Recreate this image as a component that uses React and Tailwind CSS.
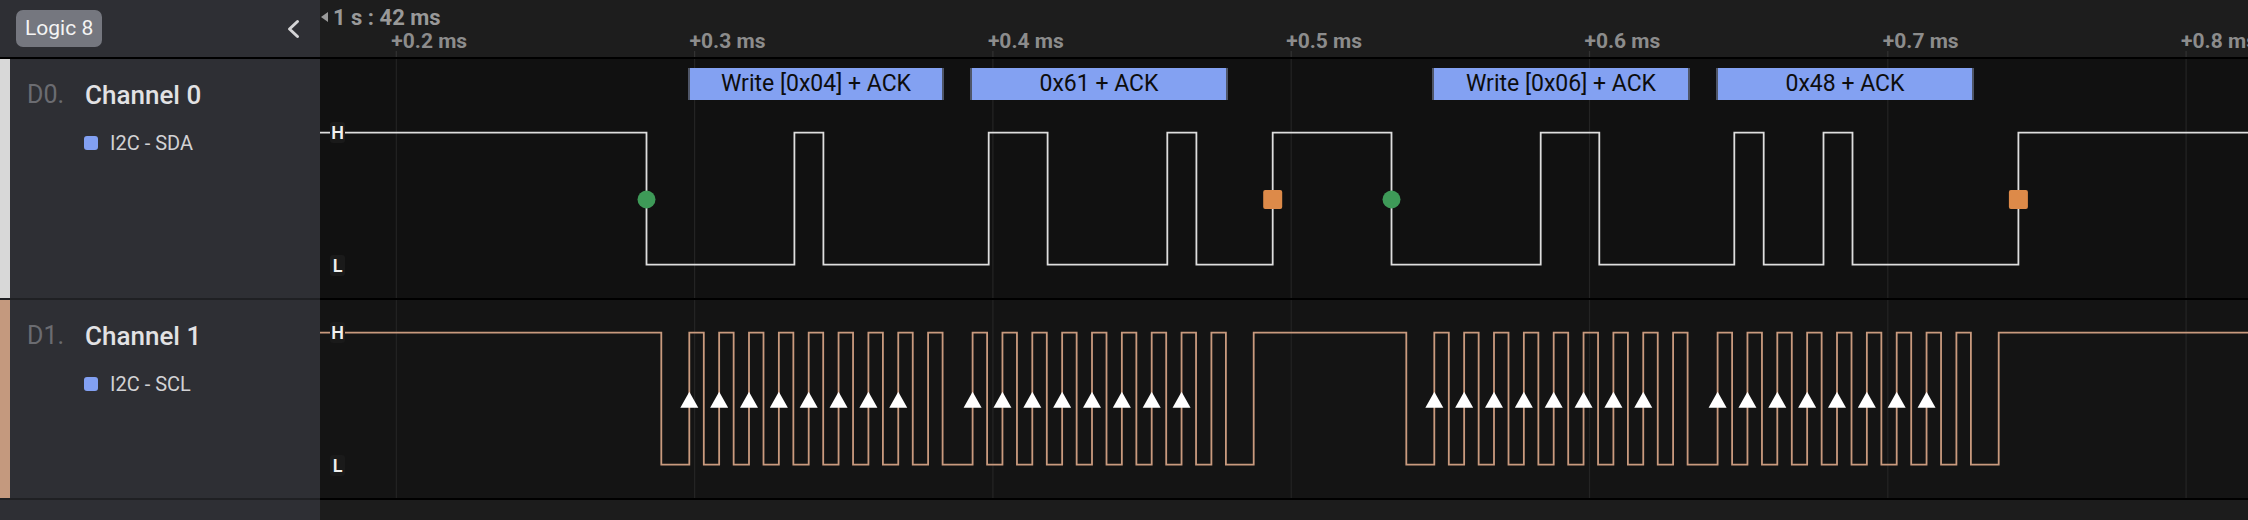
import React from "react";

const GRID = [396.3, 694.6, 992.9, 1291.2, 1589.5, 1887.8, 2186.1];
const TICKS = ["+0.2 ms", "+0.3 ms", "+0.4 ms", "+0.5 ms", "+0.6 ms", "+0.7 ms", "+0.8 ms"];
const OX = 320;
const GW = 2248 - OX;

// SCL
const SCL_HI = 32.7;
const SCL_LO = 164.7;
const T0S = [661.3, 1406.3];
const PER = 29.85;
const HIW = 14.5;

function buildScl() {
  let d = `M0 ${SCL_HI}`;
  const arrows = [];
  for (const T0 of T0S) {
    d += ` H${(T0 - OX).toFixed(2)} V${SCL_LO}`;
    for (let b = 0; b < 2; b++) {
      const base = T0 + 28 + b * 283.3;
      for (let i = 0; i < 9; i++) {
        const r = base + i * PER;
        d += ` H${(r - OX).toFixed(2)} V${SCL_HI} H${(r + HIW - OX).toFixed(2)} V${SCL_LO}`;
        if (i < 8) arrows.push(r - OX);
      }
    }
    d += ` H${(T0 + 592.4 - OX).toFixed(2)} V${SCL_HI}`;
  }
  d += ` H${GW}`;
  return { d, arrows };
}

// SDA
const SDA_HI = 73.7;
const SDA_LO = 205.7;
const SDA_EDGES = [646.5, 794.4, 823.4, 988.7, 1047.6, 1167.3, 1196.4, 1272.7, 1391.5, 1540.7, 1599.3, 1734.3, 1763.7, 1823.5, 1852.5, 2018.4];

function buildSda() {
  let d = `M0 ${SDA_HI}`;
  let high = true;
  for (const e of SDA_EDGES) {
    d += ` H${(e - OX).toFixed(2)} V${high ? SDA_LO : SDA_HI}`;
    high = !high;
  }
  d += ` H${GW}`;
  return d;
}

const DECODES = [
  { x: 688, w: 256, t: "Write [0x04] + ACK" },
  { x: 970, w: 258, t: "0x61 + ACK" },
  { x: 1432, w: 258, t: "Write [0x06] + ACK" },
  { x: 1716, w: 258, t: "0x48 + ACK" },
];

function GridLines({ h }) {
  return GRID.map((g) => (
    <line key={g} x1={g - OX} x2={g - OX} y1={0} y2={h} stroke="#242424" strokeWidth="1.2" />
  ));
}

function LevelLabel({ top, children }) {
  return (
    <div
      className="absolute left-[10px] w-[15px] h-[21px] rounded-[3px] bg-[#1a1a1a] text-[#f0f0f0] text-[18px] font-semibold leading-[21px] text-center"
      style={{ top }}
    >
      {children}
    </div>
  );
}

function ChannelSide({ bar, id, name, proto, h }) {
  return (
    <div className={`w-[320px] shrink-0 flex bg-[#2e2f34] border-b-2 border-[#1f2023] ${h}`}>
      <div className={`w-[10px] shrink-0 ${bar}`} />
      <div className="flex flex-col pl-[17px] pt-[21px]">
        <div className="flex items-center leading-[30px]">
          <span className="w-[58px] text-[25px] text-[#6b6c71]">{id}</span>
          <span className="text-[26px] font-medium text-[#e2e2e4]">{name}</span>
        </div>
        <div className="flex items-center gap-[12px] pl-[57px] mt-[21px] leading-[24px]">
          <span className="w-[14px] h-[14px] rounded-[3px] bg-[#82a0f2]" />
          <span className="text-[20px] text-[#d2d2d4]">{proto}</span>
        </div>
      </div>
    </div>
  );
}

export default function App() {
  const scl = buildScl();
  const sda = buildSda();
  return (
    <div
      className="w-[2248px] h-[520px] flex flex-col overflow-hidden bg-[#1c1c1c]"
      style={{ fontFamily: "Roboto, 'Liberation Sans', sans-serif" }}
    >
      {/* Header */}
      <div className="flex h-[59px] shrink-0">
        <div className="w-[320px] shrink-0 flex items-center justify-between pl-[16px] pr-[20px] bg-[#2e2f34] border-b-2 border-black">
          <div className="h-[37px] px-[9px] flex items-center rounded-[7px] bg-[#75777f] text-[21px] text-[#f4f4f4]">
            Logic 8
          </div>
          <svg width="14" height="20" viewBox="0 0 14 20">
            <path d="M11.5 2.5 L3.5 10 L11.5 17.5" fill="none" stroke="#d4d4d6" strokeWidth="3" strokeLinecap="round" strokeLinejoin="round" />
          </svg>
        </div>
        <div className="flex-1 relative bg-[#1d1d1d] border-b-2 border-black overflow-hidden">
          <div className="absolute left-[1px] top-[4px] flex items-center h-[26px] gap-[5px]">
            <svg width="7" height="10" viewBox="0 0 7 10">
              <path d="M7 0 L0 5 L7 10 Z" fill="#9a9a9a" />
            </svg>
            <span className="text-[22px] font-bold text-[#999999]">1 s : 42 ms</span>
          </div>
          <svg className="absolute left-0 top-0" width={GW} height="57">
            {GRID.map((g) => (
              <line key={g} x1={g - OX} x2={g - OX} y1={51} y2={57} stroke="#333" strokeWidth="1.2" />
            ))}
          </svg>
          {GRID.map((g, i) => (
            <span
              key={g}
              className="absolute top-[28px] leading-[26px] text-[21px] font-bold text-[#8c8c8c] whitespace-nowrap"
              style={{ left: g - OX - 5 }}
            >
              {TICKS[i]}
            </span>
          ))}
        </div>
      </div>

      {/* Channel 0 */}
      <div className="flex h-[241px] shrink-0">
        <ChannelSide bar="bg-[#d8d8d8]" id="D0." name="Channel 0" proto="I2C - SDA" h="h-[241px]" />
        <div className="flex-1 relative bg-[#111111] border-b-2 border-black overflow-hidden">
          <svg className="absolute left-0 top-0" width={GW} height="239">
            <GridLines h={239} />
            <path d={sda} fill="none" stroke="#dedede" strokeWidth="1.8" />
            {[646.5, 1391.5].map((x) => (
              <circle key={x} cx={x - OX} cy={140.5} r="9" fill="#3e9a58" />
            ))}
            {[1272.7, 2018.4].map((x) => (
              <rect key={x} x={x - OX - 9.5} y={131} width="19" height="19" rx="2" fill="#dd8a49" />
            ))}
          </svg>
          {DECODES.map((d) => (
            <div
              key={d.t}
              className="absolute top-[9px] h-[32px] flex items-center justify-center bg-[#83a1f2] border-x-2 border-[#4f5668] text-[23px] text-[#0d0d0d] whitespace-nowrap"
              style={{ left: d.x - OX, width: d.w }}
            >
              {d.t}
            </div>
          ))}
          <LevelLabel top={63}>H</LevelLabel>
          <LevelLabel top={195.5}>L</LevelLabel>
        </div>
      </div>

      {/* Channel 1 */}
      <div className="flex h-[200px] shrink-0">
        <ChannelSide bar="bg-[#c4997e]" id="D1." name="Channel 1" proto="I2C - SCL" h="h-[200px]" />
        <div className="flex-1 relative bg-[#141414] border-b-2 border-black overflow-hidden">
          <svg className="absolute left-0 top-0" width={GW} height="198">
            <GridLines h={198} />
            <path d={scl.d} fill="none" stroke="#c99a7e" strokeWidth="1.8" />
            {scl.arrows.map((x) => (
              <path key={x} d={`M${x.toFixed(2)} 91.7 L${(x + 9).toFixed(2)} 107.7 L${(x - 9).toFixed(2)} 107.7 Z`} fill="#ffffff" />
            ))}
          </svg>
          <LevelLabel top={21.5}>H</LevelLabel>
          <LevelLabel top={154.5}>L</LevelLabel>
        </div>
      </div>

      {/* Bottom strip */}
      <div className="flex flex-1">
        <div className="w-[320px] shrink-0 bg-[#2e2f34]" />
        <div className="flex-1 bg-[#1c1c1c]" />
      </div>
    </div>
  );
}
